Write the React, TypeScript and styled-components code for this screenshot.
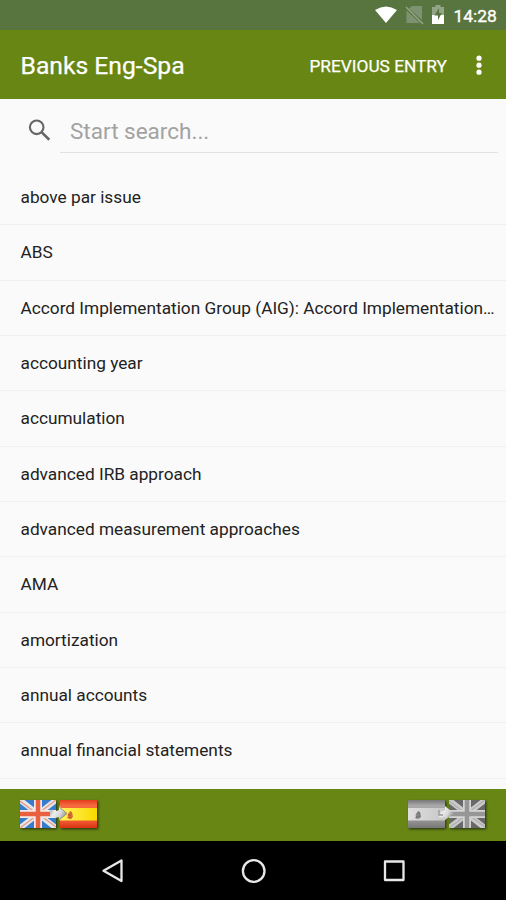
import React from "react";
import styled, { createGlobalStyle } from "styled-components";

const GlobalStyle = createGlobalStyle`
  * { box-sizing: border-box; }
  body { margin: 0; background: #fafafa; font-family: Roboto, sans-serif; }
`;

const Screen = styled.div`
  width: 506px;
  height: 900px;
  display: flex;
  flex-direction: column;
  overflow: hidden;
  background: #fafafa;
`;

const StatusBar = styled.header`
  height: 30px;
  flex: none;
  display: flex;
  align-items: center;
  justify-content: flex-end;
  padding: 2px 9px 0 0;
  background: #58753f;
  color: #fff;
`;

const StatusIcons = styled.svg`
  width: 74px;
  height: 22px;
  margin-right: 5px;
`;

const Clock = styled.span`
  width: 43.5px;
  font-size: 17.4px;
  line-height: 24px;
  font-weight: 400;
  -webkit-text-stroke: 0.35px currentColor;
  white-space: nowrap;
`;

const Toolbar = styled.div`
  height: 69px;
  flex: none;
  display: flex;
  align-items: center;
  padding: 3px 23px 0 20.5px;
  background: #678614;
  color: #fff;
`;

const Title = styled.h1`
  margin: 0;
  flex: 1;
  font-size: 24.7px;
  line-height: 32px;
  font-weight: 400;
  -webkit-text-stroke: 0.25px currentColor;
`;

const TextButton = styled.button`
  border: 0;
  padding: 0;
  background: none;
  color: inherit;
  font: 400 17.3px/24px Roboto, sans-serif;
  -webkit-text-stroke: 0.25px currentColor;
  white-space: nowrap;
`;

const MoreButton = styled.button`
  display: flex;
  border: 0;
  padding: 0;
  margin-left: 28px;
  background: none;
  color: inherit;
`;

const SearchBar = styled.div`
  height: 71px;
  flex: none;
  display: flex;
  align-items: flex-start;
  padding: 9px 8px 0 27px;
`;

const SearchIcon = styled.svg`
  width: 25px;
  height: 25px;
  margin: 10px 8px 0 0;
  fill: none;
  stroke: #666;
  stroke-width: 2.1;
`;

const SearchField = styled.input`
  flex: 1;
  min-width: 0;
  height: 45px;
  padding: 1px 10px 0;
  border: 0;
  border-bottom: 1px solid #e2e2e2;
  outline: 0;
  background: none;
  font: 400 22.5px/30px Roboto, sans-serif;
  &::placeholder { color: #a2a2a2; opacity: 1; }
`;

const EntryList = styled.ul`
  flex: 1;
  min-height: 0;
  overflow: hidden;
  margin: 0;
  padding: 0;
  list-style: none;
`;

const Entry = styled.li`
  height: 55.35px;
  padding: 0 8px 0 20.5px;
  border-bottom: 1px solid #f0f0f0;
  color: #222;
  font-size: 17.25px;
  line-height: 55px;
  white-space: nowrap;
`;

const LanguageBar = styled.div`
  height: 52px;
  flex: none;
  display: flex;
  justify-content: space-between;
  padding: 8px 17px 0;
  background: #678614;
`;

const FlagButton = styled.button`
  display: flex;
  width: 84px;
  height: 36px;
  border: 0;
  padding: 0;
  background: none;
`;

const NavBar = styled.nav`
  height: 59px;
  flex: none;
  display: flex;
  justify-content: space-between;
  align-items: center;
  padding: 1px 97px 0 98px;
  background: #000;
`;

const NavIcon = styled.svg`
  width: 30px;
  height: 30px;
  fill: none;
  stroke: #e8e8e8;
  stroke-width: 2.3;
  stroke-linejoin: round;
`;

const entries = [
  "above par issue",
  "ABS",
  "Accord Implementation Group (AIG): Accord Implementation…",
  "accounting year",
  "accumulation",
  "advanced IRB approach",
  "advanced measurement approaches",
  "AMA",
  "amortization",
  "annual accounts",
  "annual financial statements",
];

type FlagProps = { x: number; grey?: boolean };

function UnionJack({ x, grey }: FlagProps) {
  const cross = grey ? "#969696" : "#e8613f";
  return (
    <g transform={`translate(${x} 3)`}>
      <svg width="36" height="28" viewBox="0 0 36 28">
        <rect width="36" height="28" fill={grey ? "#686868" : "#347dcc"} />
        <path d="M0 0 36 28M36 0 0 28" stroke={grey ? "#cacaca" : "#e6e5e8"} strokeWidth="5.5" />
        <path
          d="M0 1 16 13M20 15 36 27M36 0 20 12M16 16 0 28"
          stroke={grey ? "#b0b0b0" : "#e99b89"}
          strokeWidth="1.4"
        />
        <path d="M18 0V28M0 14H36" stroke={grey ? "#d4d4d4" : "#f4e9e6"} strokeWidth="8" />
        <path d="M18 0V28M0 14H36" stroke={cross} strokeWidth="4.5" />
      </svg>
    </g>
  );
}

function Spain({ x, grey }: FlagProps) {
  const id = grey ? "spain-grey" : "spain";
  return (
    <g transform={`translate(${x} 3)`}>
      <defs>
        <linearGradient id={id} x1="0" x2="1">
          <stop stopColor={grey ? "#dedede" : "#fff45b"} />
          <stop offset="1" stopColor={grey ? "#c8c8c8" : "#f9d900"} />
        </linearGradient>
        <linearGradient id={`${id}-stripe`} x2="0" y2="1">
          <stop stopColor={grey ? "#777" : "#e63d1c"} />
          <stop offset=".2" stopColor={grey ? "#aaa" : "#f66b3d"} />
          <stop offset=".75" stopColor={grey ? "#929292" : "#f15a31"} />
          <stop offset="1" stopColor={grey ? "#777" : "#d83113"} />
        </linearGradient>
      </defs>
      <rect width="37" height="28" fill={`url(#${id}-stripe)`} />
      <rect y="8" width="37" height="12.5" fill={`url(#${id})`} />
      <path
        d="M8 16.5Q7 14 9 13l1-2 2 1 1 5-3 2-3-1Z"
        fill={grey ? "#777" : "#df6631"}
      />
      <path d="M8 15h3M9 18h3" stroke={grey ? "#999" : "#ad633b"} strokeWidth="1.2" />
    </g>
  );
}

function FlagPair({ grey = false }: { grey?: boolean }) {
  const shadow = grey ? "shadow-grey" : "shadow";
  const metal = grey ? "metal-grey" : "metal";
  return (
    <svg width="84" height="36" viewBox="0 0 84 36">
      <defs>
        <filter id={shadow} x="-10%" y="-10%" width="130%" height="140%">
          <feDropShadow dx="1.2" dy="1.2" stdDeviation="0.9" floodColor="#17200a" floodOpacity=".8" />
        </filter>
        <linearGradient id={metal} x1="0" y1="0" x2="1" y2=".5">
          <stop stopColor="#999" />
          <stop offset=".4" stopColor="#ededed" />
          <stop offset=".7" stopColor="#d8d8d8" />
          <stop offset="1" stopColor="#999" />
        </linearGradient>
      </defs>
      <g filter={`url(#${shadow})`}>
        {grey ? <Spain x={3} grey /> : <UnionJack x={3} />}
        {grey ? <UnionJack x={44} grey /> : <Spain x={43} />}
      </g>
      <path
        d={grey
          ? "M34 12.5Q37 15 40 13V9L49 16.5 40 23V20Q35 22 33 19Z"
          : "M33 12.5Q38 15 42 13V9L50 16.5 42 23.5V20Q36 22 33 20Z"}
        fill={`url(#${metal})`}
      />
      {!grey && <path d="M42 10 50 16.5 42 23" fill="none" stroke="#8f8968" strokeWidth=".8" />}
      {grey && <path d="M34 13V18H38" fill="none" stroke="#999" strokeWidth="1.3" />}
    </svg>
  );
}

export default function App() {
  return (
    <Screen>
      <GlobalStyle />
      <StatusBar>
        <StatusIcons viewBox="0 0 74 22">
          <path d="M0 5Q11-2 22 5L11 18Z" fill="#fff" />
          <path d="M34 3.5 37 1H47V15ZM31.5 5.5 45 18H31.5Z" fill="#7d9270" />
          <path d="M31 2 48 19" stroke="#94a68a" strokeWidth="1.4" />
          <path d="M57 2H60.5V0H65.5V2H69V10H57Z" fill="#94a487" />
          <path d="M57 10H69V19H57Z" fill="#fff" />
          <path d="m64 3-4.5 7.5H63V15l3.8-7H64Z" fill="#58753f" />
        </StatusIcons>
        <Clock>14:28</Clock>
      </StatusBar>
      <Toolbar>
        <Title>Banks Eng-Spa</Title>
        <TextButton>PREVIOUS ENTRY</TextButton>
        <MoreButton aria-label="More options">
          <svg width="8" height="22" viewBox="0 0 8 22" fill="currentColor">
            <circle cx="4" cy="3.2" r="2.6" />
            <circle cx="4" cy="10.2" r="2.6" />
            <circle cx="4" cy="17.2" r="2.6" />
          </svg>
        </MoreButton>
      </Toolbar>
      <SearchBar>
        <SearchIcon viewBox="0 0 25 25">
          <circle cx="9.7" cy="9.3" r="6.8" />
          <path d="m14.5 14.1 7.8 7.6" strokeWidth="2.6" />
        </SearchIcon>
        <SearchField placeholder="Start search..." aria-label="Search" />
      </SearchBar>
      <EntryList>
        {entries.map((entry) => (
          <Entry key={entry}>{entry}</Entry>
        ))}
      </EntryList>
      <LanguageBar>
        <FlagButton aria-label="English to Spanish"><FlagPair /></FlagButton>
        <FlagButton aria-label="Spanish to English"><FlagPair grey /></FlagButton>
      </LanguageBar>
      <NavBar>
        <NavIcon viewBox="0 0 30 30"><path d="M23.5 4.5V25L5.5 14.8Z" /></NavIcon>
        <NavIcon viewBox="0 0 30 30"><circle cx="14.7" cy="15" r="10.8" /></NavIcon>
        <NavIcon viewBox="0 0 30 30"><rect x="6" y="5.5" width="18.5" height="18.5" /></NavIcon>
      </NavBar>
    </Screen>
  );
}
